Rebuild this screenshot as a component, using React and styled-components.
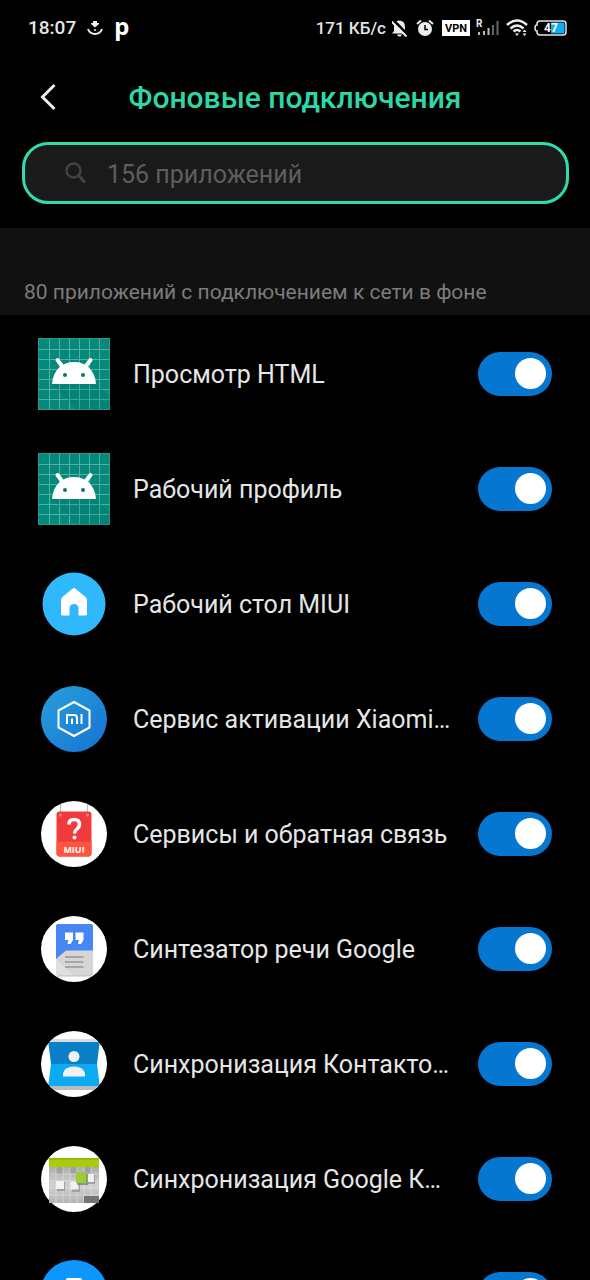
import React, { useState } from "react"
import styled, { createGlobalStyle } from "styled-components"

const GlobalStyle = createGlobalStyle`
  * {
    box-sizing: border-box;
  }

  body {
    margin: 0;
    background-color: #000;
    color: #e6e6e6;
    font-family: Roboto, "Liberation Sans", sans-serif;
  }
`

const Screen = styled.div`
  display: flex;
  flex-direction: column;
  width: 100%;
  height: 100vh;
  overflow: hidden;
`

const StatusBar = styled.div`
  display: flex;
  flex-shrink: 0;
  align-items: center;
  justify-content: space-between;
  height: 56px;
  padding: 0 23px 0 28px;
  font-weight: 500;
  line-height: 24px;

  svg {
    display: block;
  }
`

const StatusGroup = styled.div`
  display: flex;
  align-items: center;
  gap: ${props => props.$gap}px;
`

const Clock = styled.span`
  font-size: 19px;
`

const Speed = styled.span`
  font-size: 17px;
`

const AppMark = styled.span`
  color: white;
  font-family: "Noto Sans", sans-serif;
  font-size: 24px;
  font-weight: 700;
  line-height: 28px;
  padding-bottom: 4px;
`

const VpnBadge = styled.span`
  width: 28px;
  height: 16px;
  margin-left: 2px;
  background-color: #fff;
  color: #000;
  font-size: 11px;
  font-weight: 700;
  line-height: 17px;
  text-align: center;
`

const Header = styled.header`
  display: grid;
  flex-shrink: 0;
  grid-template-columns: 40px 1fr 40px;
  align-items: center;
  height: 82px;
  padding: 0 28px;
`

const BackButton = styled.button`
  width: 40px;
  height: 40px;
  padding: 0;
  border: none;
  background: none;
  cursor: pointer;

  svg {
    display: block;
  }
`

const Title = styled.h1`
  margin: 0;
  padding-top: 2px;
  color: #2ed6a8;
  font-size: 30px;
  font-weight: 500;
  line-height: 36px;
  text-align: center;
`

const SearchBox = styled.label`
  display: flex;
  flex-shrink: 0;
  align-items: center;
  gap: 20px;
  height: 62px;
  margin: 4px 21px 24px 22px;
  padding: 0 40px;
  border: 3px solid #2edcae;
  border-radius: 26px;
  background-color: #1a1a1a;

  svg {
    flex-shrink: 0;
  }
`

const SearchInput = styled.input`
  flex: 1;
  min-width: 0;
  padding: 2px 0 0;
  border: none;
  outline: none;
  background: none;
  color: #e6e6e6;
  font-family: inherit;
  font-size: 25px;

  &::placeholder {
    color: #5e5e5e;
    opacity: 1;
  }
`

const SectionTitle = styled.h2`
  flex-shrink: 0;
  margin: 0;
  padding: 50px 24px 9px;
  background-color: #111;
  color: #7c7c7c;
  font-size: 21px;
  font-weight: 400;
  line-height: 28px;
`

const AppList = styled.ul`
  flex: 1;
  min-height: 0;
  margin: 0;
  padding: 1px 0 0;
  overflow-y: auto;
  list-style: none;
  scrollbar-width: none;
`

const AppRow = styled.li`
  display: flex;
  align-items: center;
  height: 115px;
  padding: 0 38px;
`

const AppIcon = styled.svg`
  display: block;
  flex-shrink: 0;
  width: 72px;
  height: 72px;
`

const AppName = styled.label`
  flex: 1;
  min-width: 0;
  margin: 0 24px 0 23px;
  padding-top: 2px;
  overflow: hidden;
  font-size: 25px;
  line-height: 36px;
  text-overflow: ellipsis;
  white-space: nowrap;
`

const Switch = styled.input`
  display: flex;
  flex-shrink: 0;
  align-items: center;
  width: 74px;
  height: 44px;
  margin: 0;
  padding: 0 6px;
  border-radius: 22px;
  appearance: none;
  background-color: #3a3a3a;
  cursor: pointer;

  &::before {
    content: "";
    width: 31px;
    height: 31px;
    border-radius: 50%;
    background-color: #fff;
  }

  &:checked {
    justify-content: flex-end;
    background-color: #0577d0;
  }
`

const AndroidIcon = () => (
  <AppIcon viewBox="0 0 72 72" aria-hidden="true">
    <rect width="72" height="72" fill="#04897a" />
    <path
      d="M11.5 0v72M21.5 0v72M31.5 0v72M41.5 0v72M51.5 0v72M61.5 0v72M0 11.5h72M0 21.5h72M0 31.5h72M0 41.5h72M0 51.5h72M0 61.5h72"
      stroke="#55b0a3"
      strokeWidth="1"
      fill="none"
    />
    <rect x="0.5" y="0.5" width="71" height="71" fill="none" stroke="#2a9a8c" strokeWidth="1" />
    <path d="M14 46 L58 46 L72 60 V72 H40 Z" fill="#00695c" opacity="0.18" />
    <path d="M19.5 22 l6 8 M52.5 22 l-6 8" stroke="#fff" strokeWidth="4" strokeLinecap="round" />
    <path d="M14 46 C15 32 24 24 36 24 C48 24 57 32 58 46 Z" fill="#fff" />
    <circle cx="27" cy="37" r="2" fill="#04796c" />
    <circle cx="45" cy="37" r="2" fill="#04796c" />
  </AppIcon>
)

const HomeIcon = () => (
  <AppIcon viewBox="0 0 72 72" aria-hidden="true">
    <circle cx="36" cy="36" r="31.5" fill="#30b8fd" />
    <path
      d="M34.5 20.7 Q36 19.5 37.5 20.7 L47 28.5 Q49 30 49 32 V46 Q49 47.5 47.5 47.5 H40.5 V40.5 Q40.5 36 36 36 Q31.5 36 31.5 40.5 V47.5 H24.5 Q23 47.5 23 46 V32 Q23 30 25 28.5 Z"
      fill="#fff"
    />
  </AppIcon>
)

const ActivationIcon = () => (
  <AppIcon viewBox="0 0 72 72" aria-hidden="true">
    <defs>
      <linearGradient id="activationFill" x1="0" y1="0" x2="1" y2="1">
        <stop offset="0" stopColor="#279fdc" />
        <stop offset="1" stopColor="#1672d2" />
      </linearGradient>
    </defs>
    <circle cx="36" cy="36" r="33" fill="url(#activationFill)" />
    <path
      d="M36 19 L51.5 27.5 V44.5 L36 53 L20.5 44.5 V27.5 Z"
      fill="none"
      stroke="#fff"
      strokeWidth="2"
      strokeLinejoin="round"
    />
    <path
      d="M29 41 V32 H36 Q39 32 39 35 V41 M34 35.5 V41 M43.5 31 V41"
      fill="none"
      stroke="#fff"
      strokeWidth="2"
    />
  </AppIcon>
)

const FeedbackIcon = () => (
  <AppIcon viewBox="0 0 72 72" aria-hidden="true">
    <circle cx="36" cy="36" r="33" fill="#fff" />
    <path d="M22.5 6 V17 M49.5 6 V17" stroke="#bbb" strokeWidth="1" />
    <rect x="18.5" y="13.5" width="35" height="45" rx="3" fill="#ef3b3b" />
    <path
      d="M18.5 43.5 H53.5 V55.5 Q53.5 58.5 50.5 58.5 H21.5 Q18.5 58.5 18.5 55.5 Z"
      fill="#ff5440"
    />
    <circle cx="22.5" cy="17" r="1.5" fill="#f98080" />
    <circle cx="49.5" cy="17" r="1.5" fill="#f98080" />
    <path
      d="M31 26.5 Q31 21.5 36 21.5 Q41.5 21.5 41.5 26.5 Q41.5 29 39 31 Q36.5 33 36.5 35.5"
      fill="none"
      stroke="#fff"
      strokeWidth="3.5"
    />
    <circle cx="36.5" cy="39.5" r="2" fill="#fff" />
    <text
      x="36"
      y="54.5"
      fill="#fff"
      fontFamily="Open Sans, sans-serif"
      fontSize="9"
      fontWeight="700"
      textAnchor="middle"
    >
      MIUI
    </text>
  </AppIcon>
)

const SpeechIcon = () => (
  <AppIcon viewBox="0 0 72 72" aria-hidden="true">
    <circle cx="36" cy="36" r="33" fill="#fff" />
    <rect x="18" y="12" width="37" height="51" rx="2" fill="#e0e0e0" />
    <path d="M18 46 L26 37 H55 V61 Q55 63 53 63 H36 L18 46 Z" fill="#d6d6d6" />
    <path
      d="M20 11 H53 Q55 11 55 13 V37.5 H28 L18 46 V13 Q18 11 20 11 Z"
      fill="#4687f4"
    />
    <path
      d="M27 19.5 H35 V27 L32.5 31 H29.5 L30.5 27 H27 Z M37.5 19.5 H45.5 V27 L43 31 H40 L41 27 H37.5 Z"
      fill="#fff"
    />
    <path d="M27 44 H45.5 M27 49 H45.5 M27 54 H45.5" stroke="#a6a6a6" strokeWidth="2" />
    <path d="M19 63 H54" stroke="#bdbdbd" strokeWidth="1" />
  </AppIcon>
)

const ContactsIcon = () => (
  <AppIcon viewBox="0 0 72 72" aria-hidden="true">
    <defs>
      <clipPath id="contactsClip">
        <circle cx="36" cy="36" r="33" />
      </clipPath>
    </defs>
    <g clipPath="url(#contactsClip)">
      <rect width="72" height="72" fill="#fff" />
      <rect x="11" y="11" width="50" height="4" fill="#d9dde0" />
      <rect x="11" y="57" width="50" height="5" fill="#bcbcbc" />
      <path d="M12 14 H60 Q62 14 61.5 16 L59 36 H13 L10.5 16 Q10 14 12 14 Z" fill="#087fc6" />
      <path
        d="M13 36 H59 L61.5 56 Q61.5 58 60 58 H12 Q10.5 58 10.5 56 Z"
        fill="#0caaf5"
      />
    </g>
    <circle cx="36" cy="28.5" r="5.5" fill="#f1f1f1" />
    <path d="M25 48.5 V45 Q27 38.5 36 38.5 Q45 38.5 47 45 V48.5 Z" fill="#f1f1f1" />
  </AppIcon>
)

const CalendarIcon = () => (
  <AppIcon viewBox="0 0 72 72" aria-hidden="true">
    <defs>
      <linearGradient id="days" x1="0" y1="0" x2="0" y2="1">
        <stop offset="0" stopColor="#adadad" />
        <stop offset="0.5" stopColor="#cfcfcf" />
        <stop offset="1" stopColor="#b5b5b5" />
      </linearGradient>
    </defs>
    <circle cx="36" cy="36" r="33" fill="#fff" />
    <rect x="11" y="15" width="50" height="9" fill="#a9cc08" />
    <rect x="11" y="15" width="50" height="2" fill="#98ba05" />
    <rect x="11" y="24" width="50" height="36" fill="url(#days)" />
    <path d="M18 24h7v7h-7zM32 24h7v7h-7zM46 24h7v7h-7z" fill="#969696" opacity="0.6" />
    <path
      d="M18 24v36M25 24v36M32 24v36M39 24v36M46 24v36M53 24v36M11 31h50M11 38h50M11 45h50M11 52h50"
      stroke="#ececec"
      strokeWidth="1"
      opacity="0.5"
    />
    <rect x="46" y="53" width="15" height="7" fill="#747474" />
    <path d="M19 39h8v9h-8zM34 40h8v9h-8zM50 32h7v9h-7z" fill="#8d8d8d" opacity="0.7" />
    <path d="M18 38h8v8h-8zM32.5 38.5h8v8h-8zM49 31h7v8h-7z" fill="#f1f1f1" />
    <rect x="39" y="31" width="11" height="11" fill="#6b8740" opacity="0.7" />
    <rect x="38" y="29" width="10" height="11" fill="#9ccc3c" />
  </AppIcon>
)

const BlueIcon = () => (
  <AppIcon viewBox="0 0 72 72" aria-hidden="true">
    <circle cx="36" cy="36" r="34" fill="#0d96fb" />
    <rect x="28" y="20" width="16" height="30" rx="2" fill="#fff" />
  </AppIcon>
)

const apps = [
  { id: "html", name: "Просмотр HTML", Icon: AndroidIcon },
  { id: "profile", name: "Рабочий профиль", Icon: AndroidIcon },
  { id: "home", name: "Рабочий стол MIUI", Icon: HomeIcon },
  { id: "activation", name: "Сервис активации Xiaomi…", Icon: ActivationIcon },
  { id: "feedback", name: "Сервисы и обратная связь", Icon: FeedbackIcon },
  { id: "speech", name: "Синтезатор речи Google", Icon: SpeechIcon },
  { id: "contacts", name: "Синхронизация Контакто…", Icon: ContactsIcon },
  { id: "calendar", name: "Синхронизация Google К…", Icon: CalendarIcon },
  { id: "system", name: "", Icon: BlueIcon },
]

const Status = () => (
  <StatusBar>
    <StatusGroup $gap={11}>
      <Clock>18:07</Clock>
      <svg width="16" height="16" viewBox="0 0 16 16" aria-hidden="true">
        <path d="M6 1h4v2h2v1L8 7.5 4 4V3h2z" fill="#eee" />
        <circle cx="8" cy="10" r="1" fill="#eee" />
        <path d="M1 9 Q3 14 8 14 Q13 14 15 9" fill="none" stroke="#eee" strokeWidth="2" />
      </svg>
      <AppMark>p</AppMark>
    </StatusGroup>
    <StatusGroup $gap={6}>
      <Speed>171 КБ/с</Speed>
      <svg width="18" height="18" viewBox="1 0 18 18" aria-hidden="true">
        <path
          d="M8 1.5 Q14 1.5 14 8 V12 L16 14.5 H1 L3 12 V8 Q3 1.5 8 1.5 Z M6 15.5 h5 q-.5 2 -2.5 2 t-2.5 -2z"
          fill="#eee"
        />
        <path d="M2 1 L17 16" stroke="#000" strokeWidth="3" />
        <path d="M0 2 L15.5 17.5" stroke="#eee" strokeWidth="2" />
      </svg>
      <svg width="18" height="18" viewBox="0 0 18 18" aria-hidden="true">
        <circle cx="9" cy="10" r="7" fill="#eee" />
        <path d="M1 5 L5 1.5 M17 5 L13 1.5" stroke="#eee" strokeWidth="2" />
        <path d="M9 6 V10.5 H12" fill="none" stroke="#000" strokeWidth="1.5" />
      </svg>
      <VpnBadge>VPN</VpnBadge>
      <svg width="24" height="18" viewBox="0 0 24 18" aria-hidden="true">
        <text x="0" y="8" fill="#eee" fontSize="10" fontWeight="700">
          R
        </text>
        <path d="M3 13v3M8 12v4M12.5 9v7" stroke="#bbb" strokeWidth="2" />
        <path d="M17 6v10M21.5 2v14" stroke="#666" strokeWidth="2" />
      </svg>
      <svg width="22" height="18" viewBox="0 0 22 18" aria-hidden="true">
        <path
          d="M1 6 Q11 -3 21 6 M4.5 9.500 Q11 3.5 17.5 9.5 M7.5 12.5 Q11 9.5 14.5 12.5"
          fill="none"
          stroke="#eee"
          strokeWidth="2.5"
        />
        <path d="M9 14.5h4l-2 2.5z M16.5 13l2-2.500 2 2.5z M16.5 14.5l2 2.5 2-2.5z" fill="#eee" />
      </svg>
      <svg width="33" height="16" viewBox="0 0 33 16" aria-hidden="true">
        <path
          d="M6 1 H29 Q32 1 32 4 V12 Q32 15 29 15 H6 Q3 15 3 12 V11 Q1 11 1 8 Q1 5 3 5 V4 Q3 1 6 1 Z"
          fill="#000"
          stroke="#e6e6e6"
          strokeWidth="1.5"
        />
        <path d="M17 2.5 H29 Q30.5 2.5 30.5 4 V12 Q30.5 13.5 29 13.5 H17 Z" fill="#12acf2" />
        <text x="17" y="12" fill="#fff" fontSize="12" fontWeight="700" textAnchor="middle">
          47
        </text>
      </svg>
    </StatusGroup>
  </StatusBar>
)

const App = () => {
  const [disabled, setDisabled] = useState([])
  const [query, setQuery] = useState("")

  const toggle = id => {
    setDisabled(
      disabled.includes(id) ? disabled.filter(item => item !== id) : [...disabled, id]
    )
  }

  const shown = apps.filter(app => app.name.toLowerCase().includes(query.toLowerCase()))

  return (
    <>
      <GlobalStyle />
      <Screen>
        <Status />
        <Header>
          <BackButton aria-label="Назад">
            <svg width="40" height="40" viewBox="0 0 40 40" aria-hidden="true">
              <path d="M26.5 8 L14.5 20 L26.5 32" fill="none" stroke="#eee" strokeWidth="3" />
            </svg>
          </BackButton>
          <Title>Фоновые подключения</Title>
        </Header>
        <SearchBox>
          <svg width="22" height="22" viewBox="0 0 22 22" aria-hidden="true">
            <circle cx="8.5" cy="8.5" r="7" fill="none" stroke="#424242" strokeWidth="2.5" />
            <path d="M13.5 13.5 L20 20.5" stroke="#424242" strokeWidth="3" />
          </svg>
          <SearchInput
            type="text"
            aria-label="Поиск приложений"
            placeholder="156 приложений"
            value={query}
            onChange={e => setQuery(e.target.value)}
          />
        </SearchBox>
        <SectionTitle>80 приложений с подключением к сети в фоне</SectionTitle>
        <AppList>
          {shown.map(({ id, name, Icon }) => (
            <AppRow key={id}>
              <Icon />
              <AppName htmlFor={id}>{name}</AppName>
              <Switch
                id={id}
                type="checkbox"
                aria-label={name || "Приложение"}
                checked={!disabled.includes(id)}
                onChange={() => toggle(id)}
              />
            </AppRow>
          ))}
        </AppList>
      </Screen>
    </>
  )
}

export default App
